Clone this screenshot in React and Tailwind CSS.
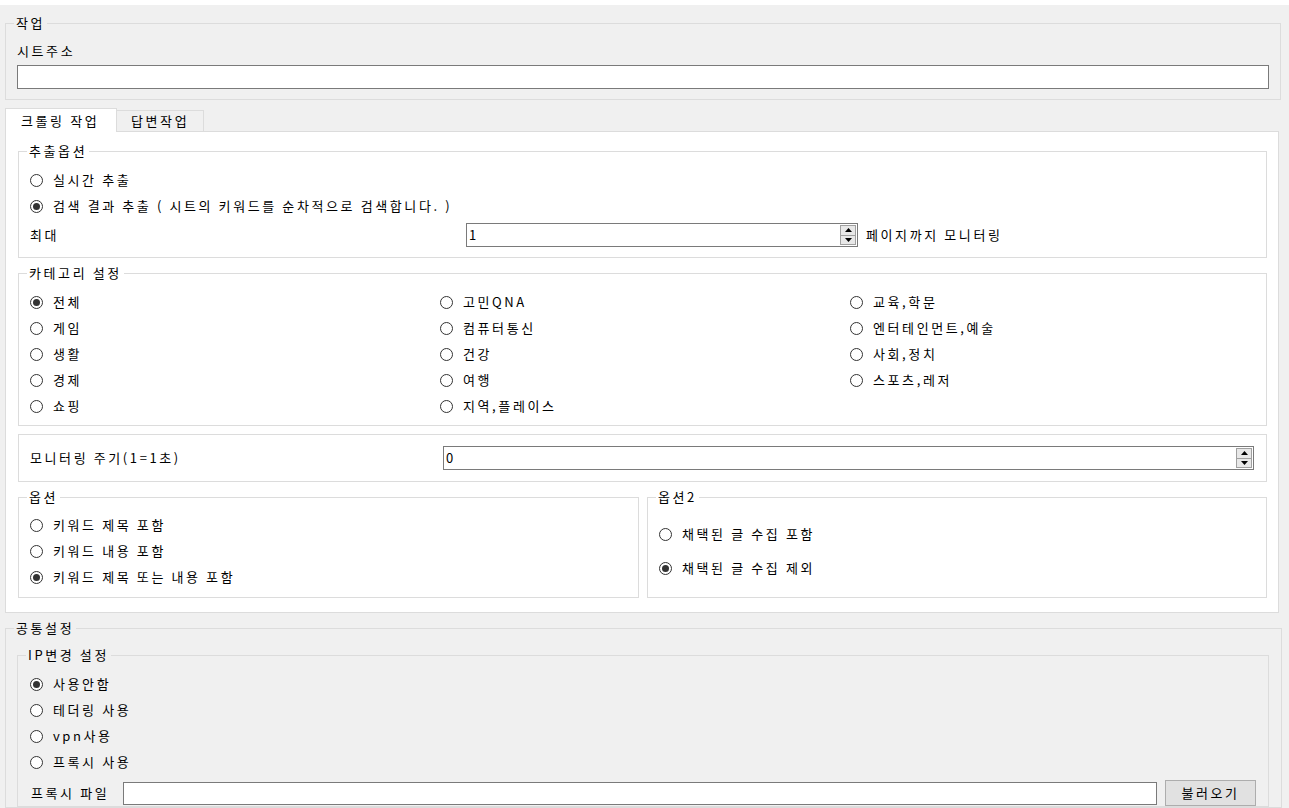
import React from "react"

const categories = [
  ["전체", true], ["고민QNA", false], ["교육,학문", false],
  ["게임", false], ["컴퓨터통신", false], ["엔터테인먼트,예술", false],
  ["생활", false], ["건강", false], ["사회,정치", false],
  ["경제", false], ["여행", false], ["스포츠,레저", false],
  ["쇼핑", false], ["지역,플레이스", false], null,
]

function Radio({ checked, label }) {
  return (
    <div className="flex h-[20px] items-center gap-[10px]">
      <span className="flex h-[13px] w-[13px] shrink-0 items-center justify-center rounded-full border border-[#333333] bg-white">
        {checked && <span className="h-[7px] w-[7px] rounded-full bg-[#333333]" />}
      </span>
      <span className="whitespace-nowrap">{label}</span>
    </div>
  )
}

function Spin() {
  return (
    <div className="flex h-[20px] w-[16px] flex-col border border-[#a0a0a0] bg-[#e8e8e8]">
      <div className="flex flex-1 items-center justify-center border-b border-[#a0a0a0]">
        <svg width="7" height="4" viewBox="0 0 7 4">
          <path d="M3.5 0 L7 4 L0 4 Z" fill="#000" />
        </svg>
      </div>
      <div className="flex flex-1 items-center justify-center">
        <svg width="7" height="4" viewBox="0 0 7 4">
          <path d="M0 0 L7 0 L3.5 4 Z" fill="#000" />
        </svg>
      </div>
    </div>
  )
}

function Group({ title, className = "", children }) {
  return (
    <fieldset className={`border border-[#dcdcdc] ${className}`}>
      <legend className="ml-[8px] px-[2px] leading-[14px]">{title}</legend>
      {children}
    </fieldset>
  )
}

export default function App() {
  return (
    <div className="h-[808px] w-[1289px] overflow-hidden bg-[#f0f0f0] font-['Noto_Sans_CJK_KR',sans-serif] text-[13px] tracking-[2.6px] text-black">
      <div className="h-[5px] bg-white" />

      <div className="pl-[5px]">
        {/* 작업 */}
        <Group title="작업" className="mt-[11px] w-[1276px]">
          <div className="px-[11px] pb-[10px] pt-[14px]">
            <div className="leading-[14px]">시트주소</div>
            <div className="mt-[7px] h-[24px] w-full border border-[#7a7a7a] bg-white" />
          </div>
        </Group>

        {/* Tabs */}
        <div className="mt-[8px] flex items-end">
          <div className="relative z-10 -mb-px flex h-[24px] w-[112px] items-center border-x border-t border-[#dcdcdc] bg-white pl-[15px]">
            크롤링 작업
          </div>
          <div className="-ml-px flex h-[21px] w-[88px] items-center border border-b-0 border-[#dcdcdc] bg-[#f0f0f0] pl-[14px]">
            답변작업
          </div>
        </div>

        <div className="w-[1274px] border border-[#dcdcdc] bg-white pb-[14px] pl-[12px] pt-[12px]">
          {/* 추출옵션 */}
          <Group title="추출옵션" className="w-[1249px]">
            <div className="flex flex-col gap-[6px] px-[11px] pb-[10px] pt-[12px]">
              <Radio checked={false} label="실시간 추출" />
              <Radio checked label="검색 결과 추출 ( 시트의 키워드를 순차적으로 검색합니다. )" />
              <div className="mt-[1px] flex h-[24px] items-center">
                <span className="w-[436px]">최대</span>
                <div className="flex h-[24px] w-[392px] items-center border border-[#7a7a7a] bg-white pl-[2px] pr-px">
                  <span className="flex-1">1</span>
                  <Spin />
                </div>
                <span className="ml-[8px]">페이지까지 모니터링</span>
              </div>
            </div>
          </Group>

          {/* 카테고리 설정 */}
          <Group title="카테고리 설정" className="mt-[8px] w-[1249px]">
            <div className="grid grid-cols-[410px_410px_1fr] gap-y-[6px] px-[11px] pb-[9px] pt-[12px]">
              {categories.map((c, i) =>
                c ? <Radio key={i} checked={c[1]} label={c[0]} /> : <div key={i} />
              )}
            </div>
          </Group>

          {/* 모니터링 주기 */}
          <div className="mt-[8px] flex h-[48px] w-[1249px] items-center border border-[#dcdcdc] pl-[11px] pr-[12px]">
            <span className="w-[413px]">모니터링 주기(1=1초)</span>
            <div className="flex h-[24px] flex-1 items-center border border-[#7a7a7a] bg-white pl-[2px] pr-px">
              <span className="flex-1">0</span>
              <Spin />
            </div>
          </div>

          {/* 옵션 / 옵션2 */}
          <div className="mt-[8px] flex gap-[8px]">
            <Group title="옵션" className="w-[621px]">
              <div className="flex flex-col gap-[6px] px-[11px] pb-[10px] pt-[11px]">
                <Radio checked={false} label="키워드 제목 포함" />
                <Radio checked={false} label="키워드 내용 포함" />
                <Radio checked label="키워드 제목 또는 내용 포함" />
              </div>
            </Group>
            <Group title="옵션2" className="w-[620px]">
              <div className="flex flex-col gap-[14px] px-[11px] pt-[20px]">
                <Radio checked={false} label="채택된 글 수집 포함" />
                <Radio checked label="채택된 글 수집 제외" />
              </div>
            </Group>
          </div>
        </div>

        {/* 공통설정 */}
        <Group title="공통설정" className="mt-[8px] w-[1277px]">
          <div className="px-[11px] pt-[13px]">
            <Group title="IP변경 설정" className="w-[1252px]">
              <div className="flex flex-col gap-[6px] px-[12px] pt-[12px]">
                <Radio checked label="사용안함" />
                <Radio checked={false} label="테더링 사용" />
                <Radio checked={false} label="vpn사용" />
                <Radio checked={false} label="프록시 사용" />
                <div className="mt-[2px] flex h-[26px] items-center pl-px">
                  <span className="w-[92px]">프록시 파일</span>
                  <div className="h-[23px] w-[1034px] border border-[#7a7a7a] bg-white" />
                  <button className="ml-[8px] flex h-[26px] w-[91px] items-center justify-center border border-[#adadad] bg-[#e1e1e1] tracking-[2.6px]">
                    불러오기
                  </button>
                </div>
              </div>
            </Group>
          </div>
        </Group>
      </div>
    </div>
  )
}
